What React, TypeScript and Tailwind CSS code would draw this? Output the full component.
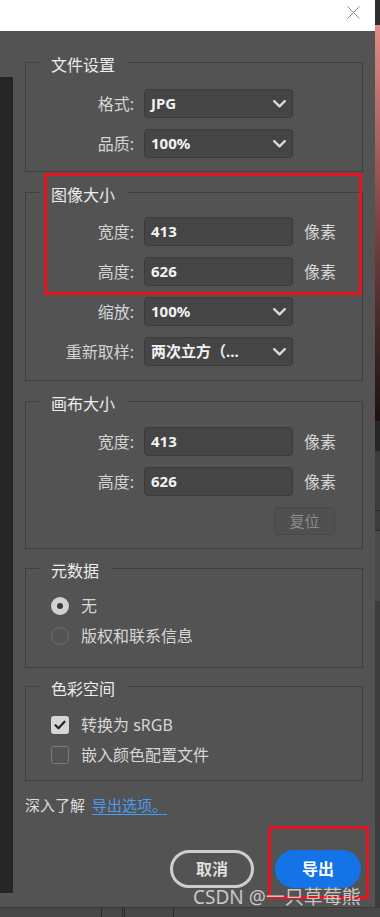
import { ReactNode } from 'react'

function Chevron() {
  return (
    <svg width="13" height="8" viewBox="0 0 13 8" className="shrink-0">
      <path d="M1.2 1.2l5.3 5.2 5.3-5.2" fill="none" stroke="#d8d8d8" strokeWidth="2.4" strokeLinecap="round" strokeLinejoin="round" />
    </svg>
  )
}

function Section({ title, className, children }: { title: string; className: string; children: ReactNode }) {
  return (
    <fieldset className={`border border-[#3f3f3f] ${className}`}>
      <legend className="ml-[13px] px-[12px] pt-[6px] text-[16px] leading-[20px] text-[#ececec]">{title}</legend>
      {children}
    </fieldset>
  )
}

function Row({ label, children }: { label: string; children: ReactNode }) {
  return (
    <div className="flex items-center h-[29px]">
      <span className="w-[108px] text-right text-[16px] text-[#d4d4d4]">{label}</span>
      <div className="ml-[10px] flex items-center">{children}</div>
    </div>
  )
}

function Select({ value }: { value: string }) {
  return (
    <div className="w-[149px] h-[29px] rounded-[4px] bg-[#454545] border border-[#3a3a3a] flex items-center justify-between pl-[6px] pr-[6px]">
      <span className="text-[15px] font-bold text-[#f2f2f2]">{value}</span>
      <Chevron />
    </div>
  )
}

function Field({ value }: { value: string }) {
  return (
    <>
      <div className="w-[149px] h-[29px] rounded-[4px] bg-[#454545] border border-[#3a3a3a] flex items-center pl-[6px]">
        <span className="text-[15px] font-bold text-[#f2f2f2]">{value}</span>
      </div>
      <span className="ml-[11px] text-[16px] text-[#d4d4d4]">像素</span>
    </>
  )
}

export default function App() {
  return (
    <div className="relative w-[380px] h-[917px] overflow-hidden bg-[#454545] font-['Noto_Sans','Noto_Sans_CJK_SC',sans-serif] flex flex-col">
      <div className="flex h-[907px]">
        {/* dialog */}
        <div className="w-[375px] flex flex-col">
          <div className="h-[31px] bg-white flex justify-end items-start pr-[15px] pt-[6px]">
            <svg width="13" height="13" viewBox="0 0 13 13">
              <path d="M0.5 0.5l12 12M12.5 0.5l-12 12" stroke="#8a8a8a" strokeWidth="1" />
            </svg>
          </div>
          <div className="flex-1 bg-[#535353] flex">
            <div className="w-[13px] mt-[46px] mb-[14px] bg-[#262626]" />
            <div className="w-[338px] ml-[12px] flex flex-col">
              <Section title="文件设置" className="mt-[18px] pt-[14px] pb-[13px]">
                <div className="flex flex-col gap-[11px]">
                  <Row label="格式:"><Select value="JPG" /></Row>
                  <Row label="品质:"><Select value="100%" /></Row>
                </div>
              </Section>

              <Section title="图像大小" className="mt-[7px] pt-[12px] pb-[14px]">
                <div className="flex flex-col gap-[11px]">
                  <Row label="宽度:"><Field value="413" /></Row>
                  <Row label="高度:"><Field value="626" /></Row>
                  <Row label="缩放:"><Select value="100%" /></Row>
                  <Row label="重新取样:"><Select value="两次立方（..." /></Row>
                </div>
              </Section>

              <Section title="画布大小" className="mt-[7px] pt-[13px] pb-[13px]">
                <div className="flex flex-col gap-[11px]">
                  <Row label="宽度:"><Field value="413" /></Row>
                  <Row label="高度:"><Field value="626" /></Row>
                  <div className="flex justify-end pr-[27px]">
                    <div className="w-[61px] h-[28px] rounded-[4px] bg-[#505050] border border-[#484848] flex items-center justify-center text-[15px] text-[#8c8c8c]">
                      复位
                    </div>
                  </div>
                </div>
              </Section>

              <Section title="元数据" className="mt-[6px] pt-[10px] pb-[16px]">
                <div className="flex items-center h-[30px] pl-[25px] gap-[12px]">
                  <div className="w-[18px] h-[18px] rounded-full bg-[#d2d2d2] flex items-center justify-center">
                    <div className="w-[6px] h-[6px] rounded-full bg-[#3a3a3a]" />
                  </div>
                  <span className="text-[16px] text-[#d6d6d6]">无</span>
                </div>
                <div className="flex items-center h-[30px] pl-[25px] gap-[12px]">
                  <div className="w-[18px] h-[18px] rounded-full border border-[#6e6e6e]" />
                  <span className="text-[16px] text-[#d6d6d6]">版权和联系信息</span>
                </div>
              </Section>

              <Section title="色彩空间" className="mt-[5px] pt-[11px] pb-[10px]">
                <div className="flex items-center h-[30px] pl-[25px] gap-[12px]">
                  <div className="w-[18px] h-[18px] rounded-[3px] bg-[#d6d6d6] flex items-center justify-center">
                    <svg width="12" height="10" viewBox="0 0 12 10">
                      <path d="M1.5 5.2l3 3 6-6.5" fill="none" stroke="#262626" strokeWidth="2.2" strokeLinecap="round" strokeLinejoin="round" />
                    </svg>
                  </div>
                  <span className="text-[16px] text-[#d6d6d6]">转换为 sRGB</span>
                </div>
                <div className="flex items-center h-[30px] pl-[25px] gap-[12px]">
                  <div className="w-[18px] h-[18px] rounded-[3px] border border-[#7a7a7a]" />
                  <span className="text-[16px] text-[#d6d6d6]">嵌入颜色配置文件</span>
                </div>
              </Section>

              <div className="mt-[14px] h-[20px] flex items-center text-[15px] leading-[20px]">
                <span className="text-[#dcdcdc]">深入了解</span>
                <span className="ml-[7px] text-[#4a9cf2] underline underline-offset-[3px]">导出选项。</span>
              </div>

              <div className="mt-[35px] flex justify-end gap-[21px] pr-[2px]">
                <div className="w-[84px] h-[38px] rounded-full border-[3px] border-[#cdcdcd] flex items-center justify-center text-[16px] font-bold text-[#dedede]">
                  取消
                </div>
                <div className="w-[86px] h-[38px] rounded-full bg-[#1473e6] flex items-center justify-center text-[16px] font-bold text-white">
                  导出
                </div>
              </div>
            </div>
          </div>
        </div>

        {/* background document edge */}
        <div className="w-[5px] flex flex-col bg-[#3c3c3c]">
          <div className="h-[25px] bg-[#2e2e2e]" />
          <div className="h-[396px] bg-gradient-to-b from-[#e28f86] via-[#7a4540] to-[#1c1211]" />
          <div className="h-[30px] bg-[#262626]" />
          <div className="h-[60px] border-b border-[#2a2a2a]" />
          <div className="h-[20px] border-b border-[#2a2a2a]" />
          <div className="h-[70px] bg-[#4a4a4a]" />
        </div>
      </div>

      {/* app bottom bar */}
      <div className="flex-1 flex bg-[#474747] border-t border-[#3a3a3a]">
        <div className="w-[102px] border-r border-[#2c2c2c]" />
        <div className="w-[21px] border-r border-[#2c2c2c]" />
        <div className="w-[2px] border-r border-[#2c2c2c]" />
        <div className="w-[49px] border-r border-[#2c2c2c]" />
      </div>

      {/* annotations */}
      <div className="absolute left-[44px] top-[173px] w-[318px] h-[122px] border-[3px] border-[#e8141f]" />
      <div className="absolute left-[268px] top-[826px] w-[101px] h-[73px] border-[3px] border-[#e8141f]" />
      <div className="absolute left-[193px] top-[886px] text-[19px] leading-[22px] text-[#c8c8c8] whitespace-nowrap">
        CSDN @一只草莓熊
      </div>
    </div>
  )
}
